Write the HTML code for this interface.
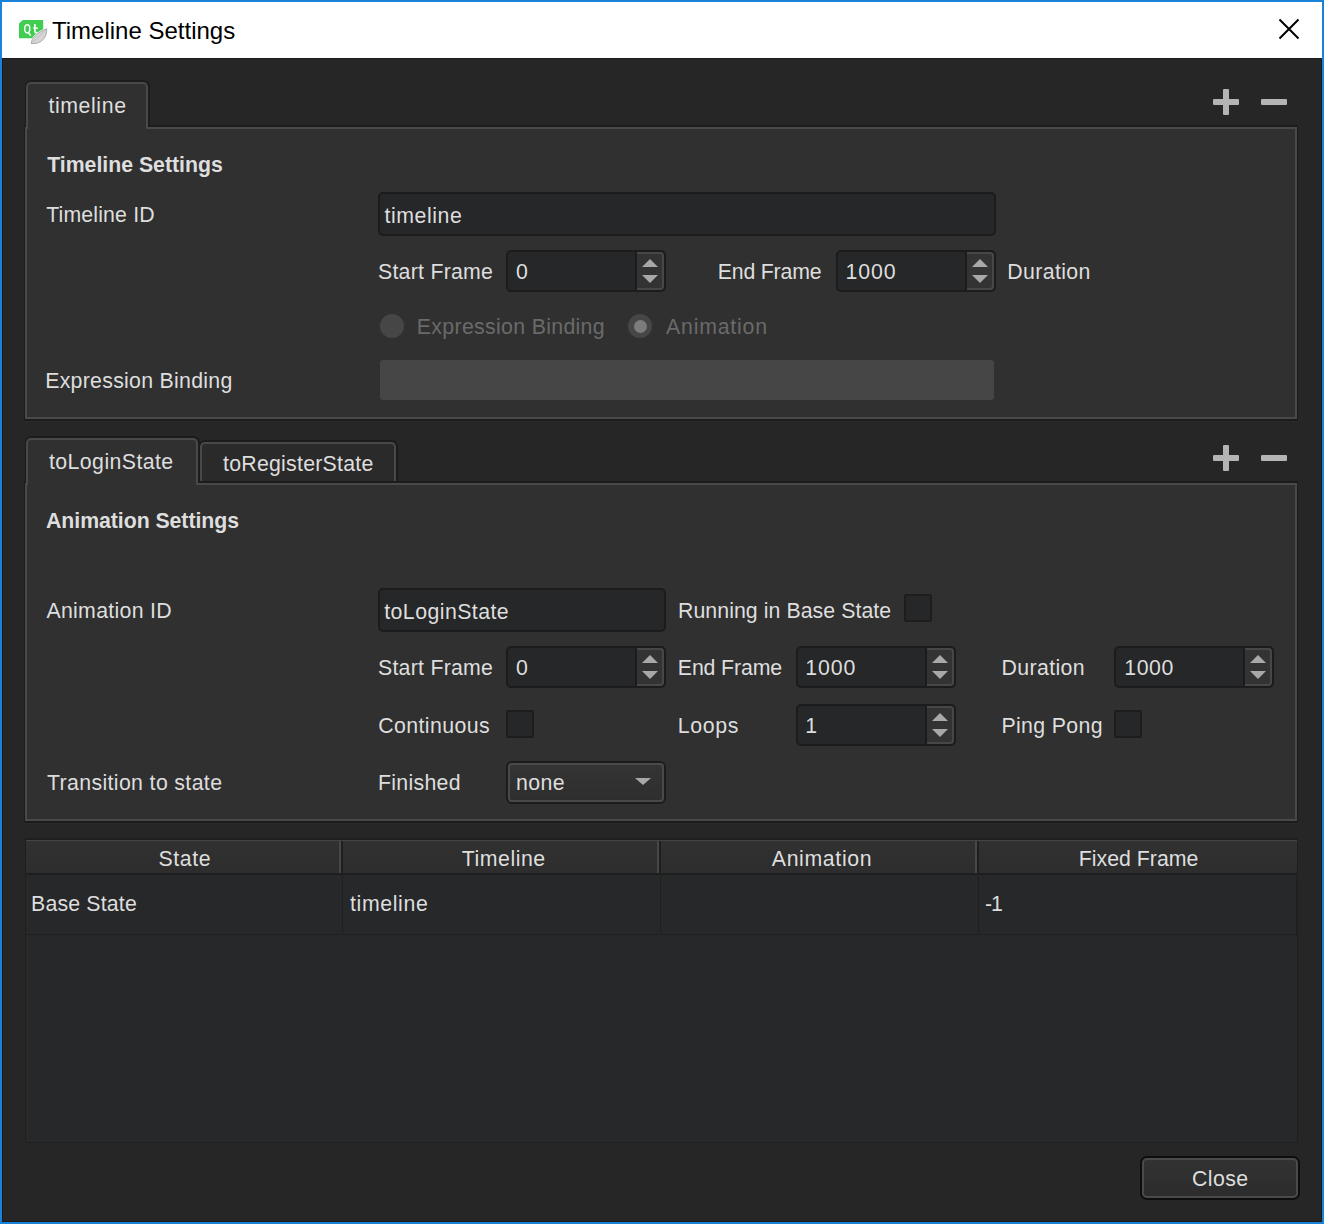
<!DOCTYPE html>
<html><head><meta charset="utf-8">
<style>
*{box-sizing:border-box;margin:0;padding:0}
html,body{width:1324px;height:1224px;overflow:hidden;background:#262626;font-family:"Liberation Sans",sans-serif}
.a{position:absolute}
#frame{position:absolute;left:0;top:0;width:1324px;height:1224px;border:2px solid #1a82d8}
#inner{position:absolute;left:2px;top:58px;width:1320px;height:1164px;border:1px solid #1e1c1a;border-top-color:#1a1a1a}
#title{position:absolute;left:0;top:0;width:1324px;height:58px;background:#fff}
.t{position:absolute;font-size:21.3px;line-height:24px;color:#dedede;white-space:nowrap}
.b{font-weight:bold}
.dis{color:#6a6a6a}
.panel{position:absolute;background:#303030;border:2px solid #494949;box-shadow:0 0 0 1px #1c1c1c,0 1px 0 1px #1c1c1c,0 -1px 0 1px #1c1c1c,0 2px 0 1px #2a2a2a}
.tab{position:absolute;background:#303030;border:2px solid #494949;border-bottom:none;border-radius:5px 5px 0 0}
.tabo{position:absolute;background:#1c1c1c;border-radius:6px 6px 0 0}
.tab.in{background:#2a2a2a}
.inp{position:absolute;background:#262728;border:2px solid #1c1c1c;border-radius:5px}
.spin{position:absolute;background:#262728;border:2px solid #1c1c1c;border-radius:5px}
.spin .btn{position:absolute;right:0;top:0;bottom:0;width:27px;background:#333;border-top:2px solid #474747;border-right:2px solid #474747;border-bottom:2px solid #474747;border-radius:0 4px 4px 0;box-shadow:-2px 0 0 #1c1c1c}
.up{position:absolute;left:5px;top:5px;width:0;height:0;border-left:8px solid transparent;border-right:8px solid transparent;border-bottom:8.5px solid #a8a8a8}
.dn{position:absolute;left:5px;top:21px;width:0;height:0;border-left:8px solid transparent;border-right:8px solid transparent;border-top:8.5px solid #a8a8a8}
.chk{position:absolute;width:28px;height:28px;background:#262728;border:2px solid #1d1d1d;border-radius:2px}
.pm{position:absolute;background:#b4b4b4;border-radius:1px}
.combo{position:absolute;background:linear-gradient(#343434,#2e2e2e);border:2px solid #494949;border-radius:4px;box-shadow:0 0 0 2px #1c1c1c}
.combo .arr{position:absolute;left:125px;top:13px;width:0;height:0;border-left:8.5px solid transparent;border-right:8.5px solid transparent;border-top:7.5px solid #a8a8a8}
.table{position:absolute;background:#27282a;border:1px solid #1f1f1f;border-top-width:2px}
.pbtn{position:absolute;background:linear-gradient(#323232,#2c2c2c);border:2px solid #4a4a4a;border-radius:5px;box-shadow:0 0 0 2px #0e0e0e}
</style></head><body>
<div id="title"></div>
<svg class="a" style="left:14px;top:14px" width="40" height="34" viewBox="0 0 40 34">
<path d="M8.8 5.9 H29.2 V24.2 H5 V9.4 Z" fill="#41cd52"/>
<ellipse cx="13.25" cy="14.85" rx="2.55" ry="4.1" fill="none" stroke="#fff" stroke-width="1.4"/>
<path d="M14.4 18.4 L16.6 21.6" stroke="#fff" stroke-width="1.5"/>
<path d="M20.9 10.1 V17.4 Q20.9 19 23.4 18.6" fill="none" stroke="#fff" stroke-width="1.6"/>
<path d="M19.2 14.1 H23.9" stroke="#fff" stroke-width="1.4"/>
<path d="M17.3 29.6 C17 24.5 23.5 18.5 32.6 14.8 C33.4 22.5 28 30.5 17.3 29.6 Z" fill="none" stroke="#fff" stroke-width="2"/>
<path d="M17.3 29.6 C17 24.5 23.5 18.5 32.6 14.8 C33.4 22.5 28 30.5 17.3 29.6 Z" fill="#d6d6d6" stroke="#a2a2a2" stroke-width="0.9"/>
<path d="M18.6 28.6 L31.6 16" stroke="#b4b4b4" stroke-width="0.7"/>
</svg>
<div class="a" style="left:52px;top:17px;font-size:24px;line-height:28px;color:#000;white-space:nowrap">Timeline Settings</div>
<svg class="a" style="left:1276px;top:16px" width="26" height="26" viewBox="0 0 26 26"><path d="M3.5 3.5 L22.5 22.5 M22.5 3.5 L3.5 22.5" stroke="#000" stroke-width="2"/></svg>
<div class="panel" style="left:25px;top:127px;width:1272px;height:292px"></div>
<div class="tabo" style="left:25px;top:80px;width:125px;height:47px"></div>
<div class="tab" style="left:26px;top:82px;width:122px;height:47px"></div>
<div id="L0" class="t " style="left:48.40px;top:94px;letter-spacing:0.600px;">timeline</div>
<div class="pm" style="left:1213px;top:99px;width:26px;height:6px"></div><div class="pm" style="left:1223px;top:89px;width:6px;height:26px"></div><div class="pm" style="left:1261px;top:99px;width:26px;height:6px"></div>
<div id="L1" class="t b" style="left:47.20px;top:153px;letter-spacing:-0.025px;">Timeline Settings</div>
<div id="L2" class="t " style="left:46.20px;top:203px;letter-spacing:0.150px;">Timeline ID</div>
<div class="inp" style="left:378px;top:192px;width:618px;height:44px"></div>
<div id="L3" class="t " style="left:384.40px;top:204px;letter-spacing:0.571px;">timeline</div>
<div id="L4" class="t " style="left:378.00px;top:260px;letter-spacing:0.250px;">Start Frame</div>
<div class="spin" style="left:506px;top:250px;width:160px;height:42px"><div class="btn"><div class="up"></div><div class="dn"></div></div></div>
<div id="L5" class="t " style="left:516.00px;top:260px;">0</div>
<div id="L6" class="t " style="left:717.80px;top:260px;letter-spacing:-0.200px;">End Frame</div>
<div class="spin" style="left:836px;top:250px;width:160px;height:42px"><div class="btn"><div class="up"></div><div class="dn"></div></div></div>
<div id="L7" class="t " style="left:845.60px;top:260px;letter-spacing:0.833px;">1000</div>
<div id="L8" class="t " style="left:1007.20px;top:260px;letter-spacing:0.386px;">Duration</div>
<div class="a" style="left:380px;top:314px;width:24px;height:24px;border-radius:50%;background:#464646"></div>
<div id="L9" class="t dis" style="left:416.80px;top:315px;letter-spacing:0.324px;">Expression Binding</div>
<div class="a" style="left:628px;top:314px;width:24px;height:24px;border-radius:50%;background:#464646"></div>
<div class="a" style="left:633.5px;top:319.5px;width:13px;height:13px;border-radius:50%;background:#7c7c7c"></div>
<div id="L10" class="t dis" style="left:666.00px;top:315px;letter-spacing:0.788px;">Animation</div>
<div id="L11" class="t " style="left:45.20px;top:369px;letter-spacing:0.282px;">Expression Binding</div>
<div class="a" style="left:380px;top:360px;width:614px;height:40px;border-radius:3px;background:#464646"></div>
<div class="panel" style="left:25px;top:483px;width:1272px;height:338px"></div>
<div class="tabo" style="left:199px;top:440px;width:199px;height:43px"></div>
<div class="tab in" style="left:200px;top:442px;width:196px;height:39px"></div>
<div class="tabo" style="left:25px;top:436px;width:175px;height:47px"></div>
<div class="tab" style="left:26px;top:438px;width:172px;height:47px"></div>
<div id="L12" class="t " style="left:49.00px;top:450px;letter-spacing:0.418px;">toLoginState</div>
<div id="L13" class="t " style="left:223.00px;top:452px;letter-spacing:0.250px;">toRegisterState</div>
<div class="pm" style="left:1213px;top:455px;width:26px;height:6px"></div><div class="pm" style="left:1223px;top:445px;width:6px;height:26px"></div><div class="pm" style="left:1261px;top:455px;width:26px;height:6px"></div>
<div id="L14" class="t b" style="left:46.00px;top:509px;letter-spacing:-0.059px;">Animation Settings</div>
<div id="L15" class="t " style="left:46.40px;top:599px;letter-spacing:0.309px;">Animation ID</div>
<div class="inp" style="left:378px;top:588px;width:288px;height:44px"></div>
<div id="L16" class="t " style="left:384.20px;top:600px;letter-spacing:0.445px;">toLoginState</div>
<div id="L17" class="t " style="left:678.00px;top:599px;letter-spacing:0.060px;">Running in Base State</div>
<div class="chk" style="left:904px;top:594px"></div>
<div id="L18" class="t " style="left:378.00px;top:656px;letter-spacing:0.250px;">Start Frame</div>
<div class="spin" style="left:506px;top:646px;width:160px;height:42px"><div class="btn"><div class="up"></div><div class="dn"></div></div></div>
<div id="L19" class="t " style="left:516.00px;top:656px;">0</div>
<div id="L20" class="t " style="left:677.80px;top:656px;letter-spacing:-0.125px;">End Frame</div>
<div class="spin" style="left:796px;top:646px;width:160px;height:42px"><div class="btn"><div class="up"></div><div class="dn"></div></div></div>
<div id="L21" class="t " style="left:805.20px;top:656px;letter-spacing:0.933px;">1000</div>
<div id="L22" class="t " style="left:1001.40px;top:656px;letter-spacing:0.400px;">Duration</div>
<div class="spin" style="left:1114px;top:646px;width:160px;height:42px"><div class="btn"><div class="up"></div><div class="dn"></div></div></div>
<div id="L23" class="t " style="left:1124.20px;top:656px;letter-spacing:0.600px;">1000</div>
<div id="L24" class="t " style="left:378.20px;top:714px;letter-spacing:0.422px;">Continuous</div>
<div class="chk" style="left:506px;top:710px"></div>
<div id="L25" class="t " style="left:677.80px;top:714px;letter-spacing:0.625px;">Loops</div>
<div class="spin" style="left:796px;top:704px;width:160px;height:42px"><div class="btn"><div class="up"></div><div class="dn"></div></div></div>
<div id="L26" class="t " style="left:805.20px;top:714px;">1</div>
<div id="L27" class="t " style="left:1001.40px;top:714px;letter-spacing:0.350px;">Ping Pong</div>
<div class="chk" style="left:1114px;top:710px"></div>
<div id="L28" class="t " style="left:47.00px;top:771px;letter-spacing:0.361px;">Transition to state</div>
<div id="L29" class="t " style="left:378.00px;top:771px;letter-spacing:0.300px;">Finished</div>
<div class="combo" style="left:508px;top:763px;width:156px;height:39px"><div class="arr"></div></div>
<div id="L30" class="t " style="left:516.00px;top:771px;letter-spacing:0.400px;">none</div>
<div class="table" style="left:25px;top:838px;width:1273px;height:305px"></div>
<div class="a" style="left:26px;top:840px;width:1271px;height:33px;background:linear-gradient(#313131,#2d2d2d);border-top:1px solid #444"></div>
<div class="a" style="left:26px;top:873px;width:1271px;height:2px;background:#1e1e1e"></div>
<div class="a" style="left:26px;top:875px;width:1271px;height:60px;background:#27282a;border-bottom:1px solid #1e1f20;border-right:1px solid #1f2021"></div>
<div class="a" style="left:339px;top:841px;width:2px;height:32px;background:#474747"></div><div class="a" style="left:341px;top:841px;width:2px;height:34px;background:#1f1f1f"></div><div class="a" style="left:342px;top:875px;width:1px;height:58px;background:#1f1f1f"></div>
<div class="a" style="left:657px;top:841px;width:2px;height:32px;background:#474747"></div><div class="a" style="left:659px;top:841px;width:2px;height:34px;background:#1f1f1f"></div><div class="a" style="left:660px;top:875px;width:1px;height:58px;background:#1f1f1f"></div>
<div class="a" style="left:975px;top:841px;width:2px;height:32px;background:#474747"></div><div class="a" style="left:977px;top:841px;width:2px;height:34px;background:#1f1f1f"></div><div class="a" style="left:978px;top:875px;width:1px;height:58px;background:#1f1f1f"></div>
<div id="L31" class="t " style="left:158.40px;top:847px;letter-spacing:0.600px;">State</div>
<div id="L32" class="t " style="left:461.80px;top:847px;letter-spacing:0.514px;">Timeline</div>
<div id="L33" class="t " style="left:771.80px;top:847px;letter-spacing:0.637px;">Animation</div>
<div id="L34" class="t " style="left:1078.80px;top:847px;letter-spacing:0.010px;">Fixed Frame</div>
<div id="L35" class="t " style="left:31.00px;top:892px;letter-spacing:0.178px;">Base State</div>
<div id="L36" class="t " style="left:350.00px;top:892px;letter-spacing:0.629px;">timeline</div>
<div id="L37" class="t " style="left:985.00px;top:892px;letter-spacing:-1.000px;">-1</div>
<div class="pbtn" style="left:1142px;top:1158px;width:156px;height:40px"></div>
<div id="L38" class="t " style="left:1192.00px;top:1167px;letter-spacing:0.400px;">Close</div>
<div id="frame"></div>
<div id="inner"></div>
</body></html>
